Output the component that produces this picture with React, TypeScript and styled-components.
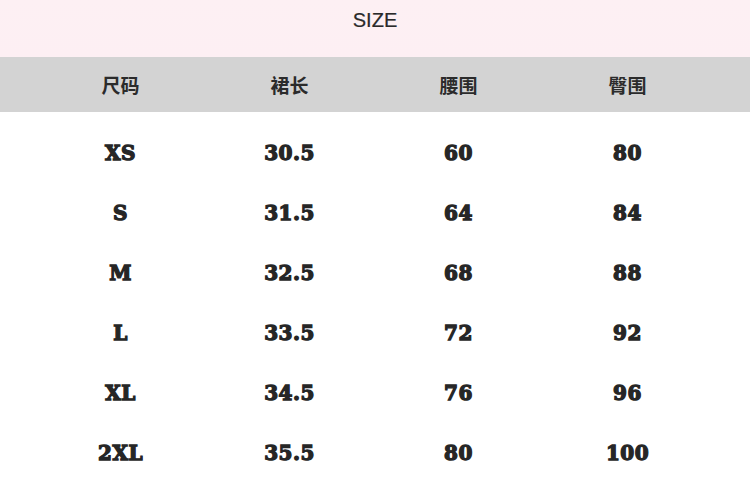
import React from "react";
import styled, { createGlobalStyle } from "styled-components";

const GlobalStyle = createGlobalStyle`
  html, body {
    margin: 0;
    padding: 0;
    background: #ffffff;
  }
`;

const columns = ["尺码", "裙长", "腰围", "臀围"];

const rows = [
  ["XS", "30.5", "60", "80"],
  ["S", "31.5", "64", "84"],
  ["M", "32.5", "68", "88"],
  ["L", "33.5", "72", "92"],
  ["XL", "34.5", "76", "96"],
  ["2XL", "35.5", "80", "100"],
];

const App: React.FunctionComponent = () => {
  return (
    <Wrapper>
      <GlobalStyle />
      <TitleBand>SIZE</TitleBand>
      <HeaderRow>
        {columns.map((c) => (
          <HeaderCell key={c}>{c}</HeaderCell>
        ))}
      </HeaderRow>
      <Body>
        {rows.map((r) => (
          <Row key={r[0]}>
            {r.map((v, i) => (
              <Cell key={i}>{v}</Cell>
            ))}
          </Row>
        ))}
      </Body>
    </Wrapper>
  );
};

const Wrapper = styled.div`
  width: 750px;
  height: 490px;
  overflow: hidden;
  background: #ffffff;
`;

const TitleBand = styled.div`
  height: 57px;
  display: flex;
  align-items: center;
  justify-content: center;
  padding-bottom: 16px;
  box-sizing: border-box;
  background: linear-gradient(#fdf0f3, #fdeff3);
  font-family: "Liberation Sans", Arial, sans-serif;
  font-size: 20px;
  color: #2a2a2a;
  -webkit-text-stroke: 0.2px #2a2a2a;
`;

const HeaderRow = styled.div`
  height: 55px;
  display: grid;
  grid-template-columns: repeat(4, 169px);
  padding-left: 36px;
  align-items: center;
  background: #d3d3d3;
`;

const HeaderCell = styled.div`
  text-align: center;
  font-family: "Noto Sans CJK SC", sans-serif;
  font-weight: 700;
  font-size: 19px;
  color: #2b2b2b;
`;

const Body = styled.div`
  padding-top: 11px;
`;

const Row = styled.div`
  height: 60px;
  display: grid;
  grid-template-columns: repeat(4, 169px);
  padding-left: 36px;
  align-items: center;
`;

const Cell = styled.div`
  text-align: center;
  font-family: "DejaVu Serif", serif;
  font-weight: bold;
  font-size: 20px;
  letter-spacing: 0.5px;
  color: #262626;
  -webkit-text-stroke: 1.3px #262626;
`;

export default App;
